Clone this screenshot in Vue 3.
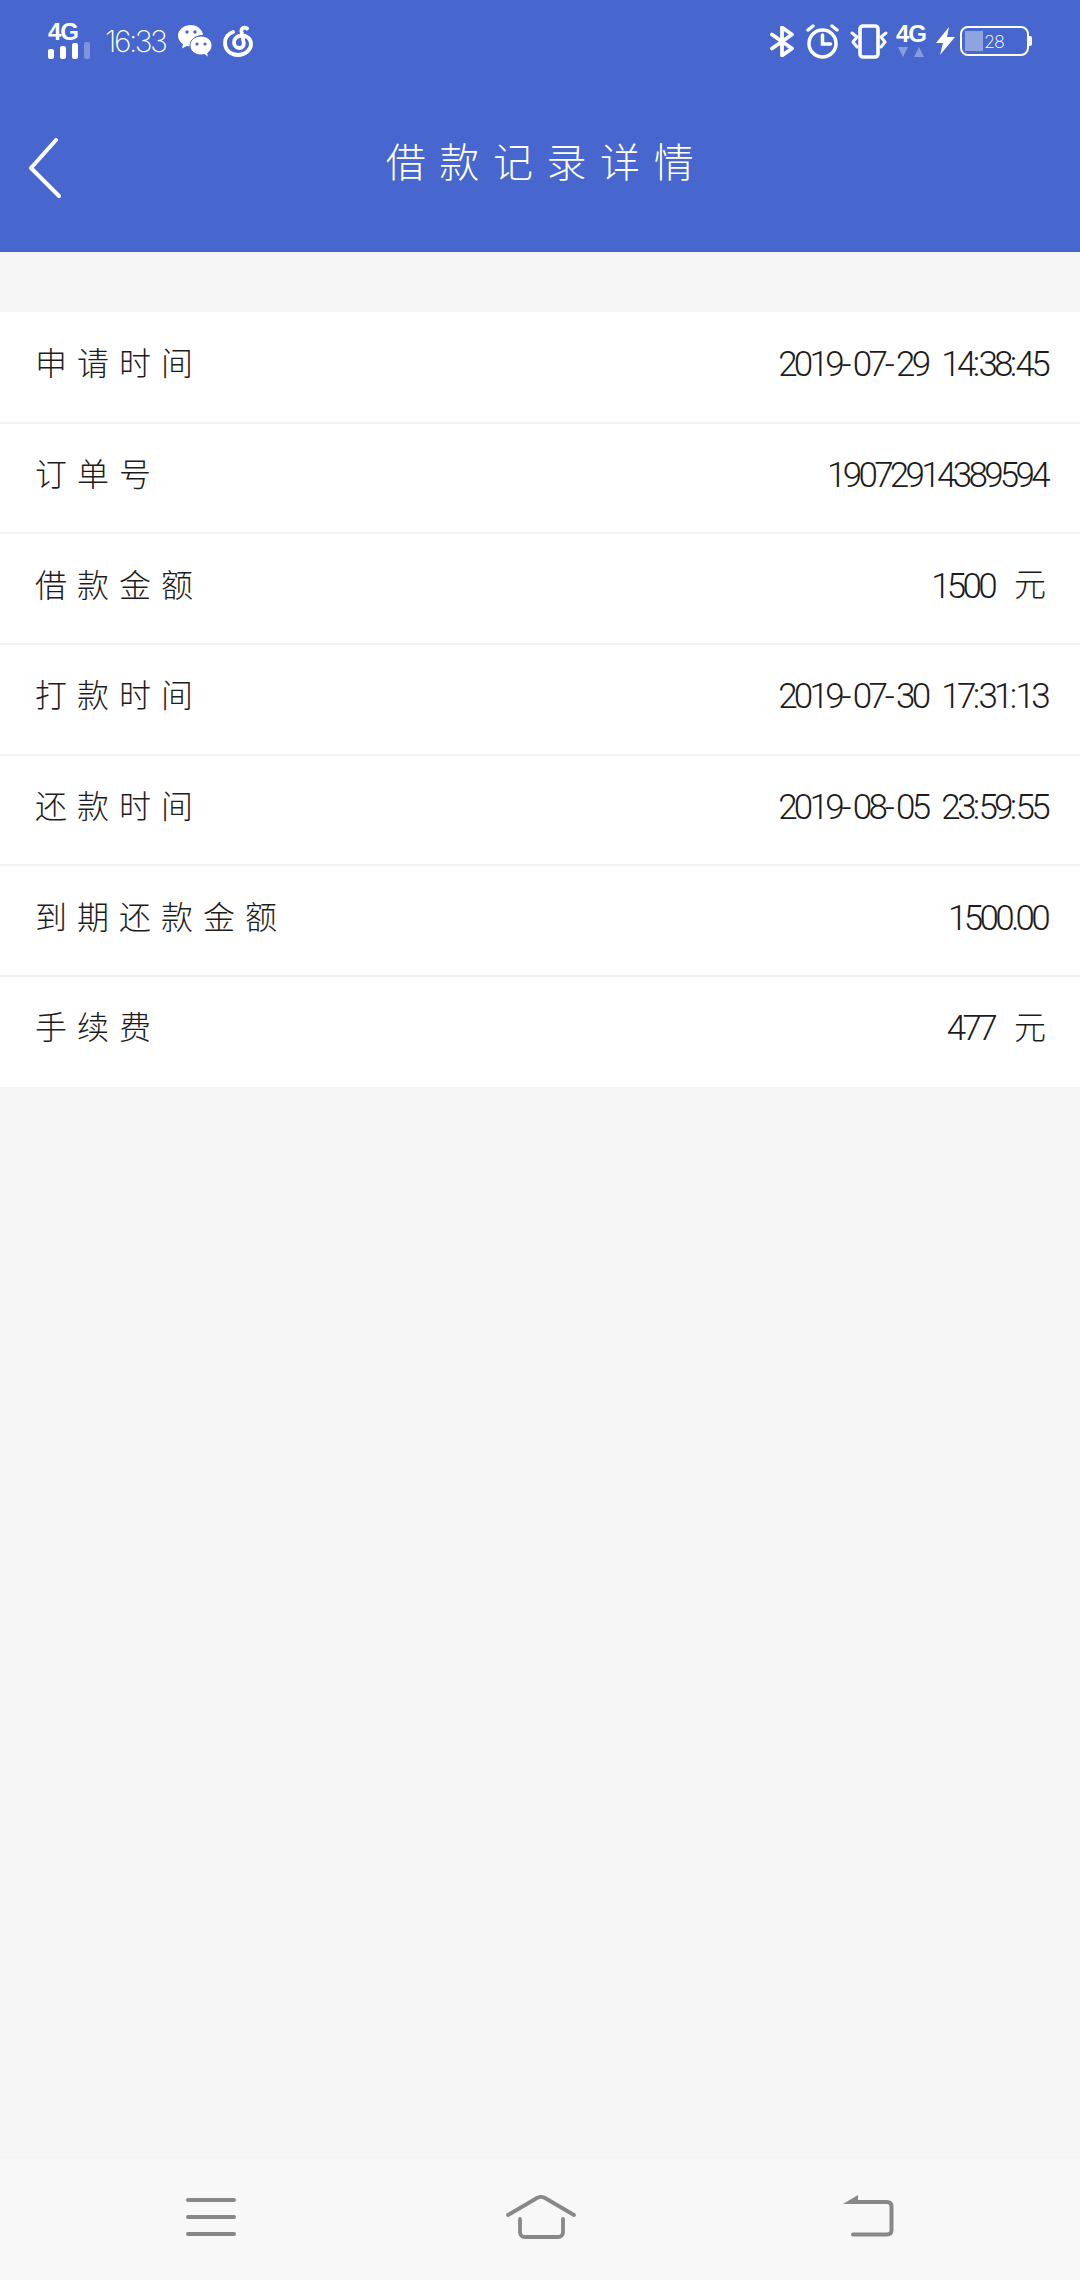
<script setup>
const rows = [
  { label: '申请时间', value: '2019-07-29  14:38:45' },
  { label: '订单号', value: '19072914389594' },
  { label: '借款金额', value: '1500', unit: '元' },
  { label: '打款时间', value: '2019-07-30  17:31:13' },
  { label: '还款时间', value: '2019-08-05  23:59:55' },
  { label: '到期还款金额', value: '1500.00' },
  { label: '手续费', value: '477', unit: '元' },
]
const parts = (value) => value.split(/(-|:)/).filter(Boolean)
</script>

<template>
  <div class="page">
    <header class="header">
      <div class="status">
        <div class="status-left">
          <div class="signal">
            <span class="net">4G</span>
            <svg class="bars" width="42" height="17" viewBox="0 0 42 17">
              <rect x="0" y="7" width="6" height="10" rx="2" fill="#fff" />
              <rect x="12" y="4" width="6" height="13" rx="2" fill="#fff" />
              <rect x="24" y="1" width="6" height="16" rx="2" fill="#fff" />
              <rect x="36" y="0" width="6" height="17" rx="2" fill="#fff" opacity=".3" />
            </svg>
          </div>
          <span class="time">16:33</span>
          <svg class="wechat" width="34" height="33" viewBox="0 0 34 33">
            <path d="M13 0C6 0 0 4.700 0 10.800c0 3.500 2 6.500 5 8.500l-1 4.200 4.800-2.600c1.100.3 2.200.4 3.400.4C12 15 18 9.500 25.200 9.700 23.800 4 19 0 13 0z" fill="#fff" />
            <circle cx="9" cy="7" r="1.700" fill="#4766ce" />
            <circle cx="17" cy="7" r="1.700" fill="#4766ce" />
            <path d="M23 11c-6 0-11 3.900-11 9.500S17 30 23 30c1.200 0 2.300-.2 3.400-.5l4.100 3-.8-4.400c2.600-1.800 4.300-4.500 4.300-7.600C34 15 29 11 23 11z" fill="#fff" stroke="#4766ce" stroke-width="1" />
            <circle cx="19" cy="19" r="1.600" fill="#4766ce" />
            <circle cx="27" cy="19" r="1.600" fill="#4766ce" />
          </svg>
          <svg class="netease" width="30" height="32" viewBox="0 0 30 32" fill="none" stroke="#fff" stroke-width="3.800" stroke-linecap="round">
            <path d="M10 7C4.500 9 2 13.500 2 18c0 7 5.800 12 13 12S28 25 28 19c0-5-4-8.500-9-8.500-4.500 0-8 3-8 7 0 3.200 2.500 5.500 5.200 5.500 3 0 5-2.300 4.500-5.500L18.500 6.500c-.5-3 2-5 5.500-3" />
          </svg>
        </div>
        <div class="status-right">
          <svg class="i-bt" width="24" height="31" viewBox="0 0 24 31" fill="none" stroke="#fff" stroke-width="3.800" stroke-linecap="round" stroke-linejoin="round">
            <path d="M2 8.500l20 14L12 29.500V1.500l10 7L2 22.500" />
          </svg>
          <svg class="i-alarm" width="35" height="35" viewBox="0 0 35 35" fill="none" stroke="#fff" stroke-width="3.500" stroke-linecap="round">
            <circle cx="17.500" cy="19.500" r="13.500" />
            <path d="M17.500 11v9h8M3 6l5-4M32 6l-5-4" />
          </svg>
          <svg class="i-vib" width="38" height="35" viewBox="0 0 38 35" fill="none" stroke="#fff" stroke-linecap="round" stroke-linejoin="round">
            <rect x="10" y="2" width="18" height="31" rx="3" stroke-width="3.600" />
            <path d="M2 9l5 4-4 5 4 5M36 9l-5 4 4 5-4 5" stroke-width="3" />
          </svg>
          <div class="net-group">
            <span class="net">4G</span>
            <svg width="26" height="10" viewBox="0 0 26 10" fill="#fff" opacity=".35">
              <path d="M0 0h10L5 10zM16 10h10L21 0z" />
            </svg>
          </div>
          <svg class="bolt" width="19" height="28" viewBox="0 0 19 28">
            <path d="M13 0L0 16h7L4 28 19 10h-8z" fill="#fff" />
          </svg>
          <div class="battery">
            <div class="cell">
              <span class="fill"></span>
              <span class="level">28</span>
            </div>
            <span class="nub"></span>
          </div>
        </div>
      </div>
      <div class="titlebar">
        <svg class="back" width="34" height="62" viewBox="0 0 34 62" fill="none" stroke="#fff" stroke-width="4" stroke-linecap="round" stroke-linejoin="round">
          <path d="M28 2L3 30l28 28" />
        </svg>
        <h1 class="title">借款记录详情</h1>
      </div>
    </header>

    <main class="main">
      <ul class="list">
        <li v-for="row in rows" :key="row.label" class="row">
          <span class="label">{{ row.label }}</span>
          <span class="value">
            <span class="num"><span
              v-for="(p, i) in parts(row.value)"
              :key="i"
              :class="{ dash: p === '-', colon: p === ':' }"
            >{{ p }}</span></span>
            <span v-if="row.unit" class="unit">{{ row.unit }}</span>
          </span>
        </li>
      </ul>
    </main>

    <nav class="nav">
      <svg width="50" height="42" viewBox="0 0 50 42" fill="none" stroke="#888" stroke-width="4" stroke-linecap="round">
        <path d="M2 5h46M2 22h46M2 39h46" />
      </svg>
      <svg class="home" width="70" height="44" viewBox="0 0 70 44" fill="none" stroke="#888" stroke-width="3.800" stroke-linecap="round" stroke-linejoin="round">
        <path d="M2 20L31 3c2.500-1.400 5.500-1.400 8 0l29 17" />
        <path d="M14 24v13c0 3 2 5 5 5h33c3 0 5-2 5-5V24" />
      </svg>
      <svg width="51" height="42" viewBox="0 0 51 42" fill="none">
        <path d="M15 0v9H0z" fill="#888" />
        <path d="M8 7h36c3 0 4.500 1.500 4.500 4.500V35c0 3-1.500 4.500-4.500 4.500H10" stroke="#888" stroke-width="4" stroke-linecap="round" />
      </svg>
    </nav>
  </div>
</template>

<style>
html, body { margin: 0; background: #f5f5f5; }
</style>

<style scoped>
.page {
  width: 1080px;
  height: 2280px;
  display: flex;
  flex-direction: column;
  background: #f5f5f5;
  font-family: Inter, "Noto Sans CJK SC", sans-serif;
  overflow: hidden;
}
.header {
  height: 252px;
  background: #4766ce;
  color: #fff;
}
.status {
  height: 84px;
  box-sizing: border-box;
  padding: 22px 48px 0 48px;
  display: flex;
  justify-content: space-between;
  align-items: flex-start;
}
.status-left, .status-right {
  display: flex;
  align-items: center;
  height: 38px;
}
.status-left { gap: 11px; }
.signal { display: flex; flex-direction: column; align-items: flex-start; gap: 1px; margin-right: 4px; }
.net {
  font: 700 24px/18px "Liberation Sans", sans-serif;
  letter-spacing: -1px;
}
.net-group {
  width: 28px;
  display: flex;
  flex-direction: column;
  align-items: center;
  gap: 4px;
  margin-left: 9px;
}
.i-alarm { margin-left: 11px; }
.i-vib { margin-left: 10px; }
.bolt { margin-left: 11px; }
.battery { margin-left: 5px; }
.time {
  font-size: 30px;
  font-weight: 200;
  letter-spacing: -2.500px;
  line-height: 36px;
  width: 62px;
}
.battery { display: flex; align-items: center; }
.cell {
  box-sizing: border-box;
  width: 69px;
  height: 30px;
  border: 2px solid #fff;
  border-radius: 8px;
  padding: 3px;
  display: flex;
  align-items: center;
  gap: 1px;
}
.fill { width: 18px; height: 100%; background: rgba(255, 255, 255, .4); }
.level { font-size: 18px; font-weight: 200; letter-spacing: -1px; }
.nub { width: 3px; height: 10px; background: #fff; border-radius: 0 2px 2px 0; }
.titlebar {
  height: 168px;
  position: relative;
  display: flex;
  align-items: center;
  justify-content: center;
}
.back { position: absolute; left: 28px; top: 54px; }
.title {
  margin: 0;
  margin-top: -16px;
  font: 300 40px/1.2 "Noto Sans CJK SC", sans-serif;
  letter-spacing: 13.600px;
  text-indent: 13px;
}
.main { flex: 1; padding-top: 60px; }
.list {
  list-style: none;
  margin: 0;
  padding: 0;
  background: #fff;
}
.row {
  box-sizing: border-box;
  height: 110.670px;
  padding: 0 30px 0 35px;
  display: flex;
  align-items: center;
  justify-content: space-between;
  box-shadow: inset 0 -1px 0 #f2f2f2, 0 1px 0 #f2f2f2;
}
.row:last-child { box-shadow: none; }
.label {
  font: 300 32px/1 "Noto Sans CJK SC", sans-serif;
  letter-spacing: 10px;
  color: #1c1c1c;
  margin-top: -12px;
}
.value {
  display: flex;
  align-items: center;
  gap: 20px;
  color: #1c1c1c;
  font-family: Roboto, sans-serif;
  font-size: 35px;
  font-weight: 300;
  letter-spacing: -3.700px;
  word-spacing: 2px;
  white-space: pre;
  margin: -5px 3px 0 0;
}
.dash { letter-spacing: 1.300px; margin-left: .5px; }
.colon { letter-spacing: -1.600px; }
.unit {
  font: 300 32px/1 "Noto Sans CJK SC", sans-serif;
  letter-spacing: 0;
  margin: 0 1px 8px 0;
}
.nav {
  height: 121px;
  background: #f8f8f8;
  display: flex;
  align-items: flex-start;
  padding: 36px 186px 0;
  box-sizing: border-box;
  justify-content: space-between;
}
.home { margin-left: 3px; }
</style>
